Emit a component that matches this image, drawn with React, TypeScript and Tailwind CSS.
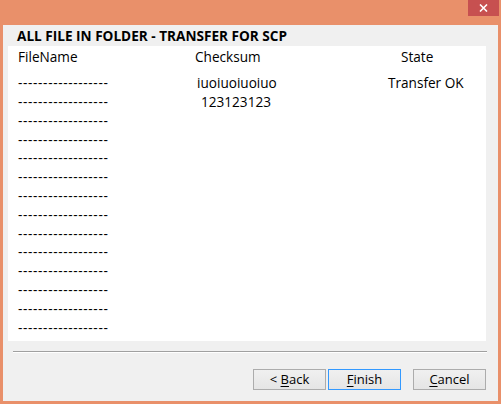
const ROWS = 14;

const DATA: Record<number, { sum?: string; state?: string; sumPad?: string }> = {
  0: { sum: "iuoiuoiuoiuo", state: "Transfer OK", sumPad: "pl-[2px]" },
  1: { sum: "123123123", sumPad: "pl-[6px]" },
};

function WinButton({ label, accel, prefix, focused }: { label: string; accel: string; prefix?: string; focused?: boolean }) {
  return (
    <button
      className={`w-[73px] h-[21px] flex items-center justify-center text-[13px] text-black bg-gradient-to-b from-[#f0f0f0] to-[#e5e5e5] border ${
        focused ? "border-[#3399ff]" : "border-[#acacac]"
      }`}
    >
      <span className="whitespace-pre">
        {prefix}
        <span className="underline underline-offset-2">{accel}</span>
        {label}
      </span>
    </button>
  );
}

export default function App() {
  return (
    <div
      className="w-[501px] h-[404px] bg-[#e9906a] flex flex-col"
      style={{ fontFamily: '"Open Sans", "Noto Sans", sans-serif' }}
    >
      {/* Title bar */}
      <div className="h-[25px] flex justify-end items-start shrink-0 pr-[2px]">
        <div className="w-[31px] h-[16px] bg-[#c75050] flex items-center justify-center">
          <svg width="9" height="8" viewBox="0 0 9 8">
            <path d="M1 0.5 L8 7.5 M8 0.5 L1 7.5" stroke="white" strokeWidth="1.6" />
          </svg>
        </div>
      </div>

      {/* Client */}
      <div className="flex-1 mx-[3px] mb-[3px] bg-[#f0f0f0] flex flex-col">
        <div className="h-[21px] pl-[14px] flex items-center pt-[1px] text-[13.6px] font-bold text-black">
          ALL FILE IN FOLDER - TRANSFER FOR SCP
        </div>

        <div className="ml-[5px] w-[478px] h-[295px] bg-white pt-[2px] text-[13.6px] text-black">
          <div className="h-[19px] flex items-center">
            <div className="w-[187px] pl-[10px]">FileName</div>
            <div className="w-[206px]">Checksum</div>
            <div>State</div>
          </div>
          <div className="mt-[7px]">
            {Array.from({ length: ROWS }).map((_, i) => {
              const d = DATA[i] || {};
              return (
                <div key={i} className="h-[18.8px] flex items-center">
                  <div className="w-[187px] pl-[10px] tracking-[0.65px]">------------------</div>
                  <div className={`w-[193px] ${d.sumPad || ""}`}>{d.sum}</div>
                  <div>{d.state}</div>
                </div>
              );
            })}
          </div>
        </div>

        <div className="mt-[10px] ml-[10px] w-[474px] h-px bg-[#a0a0a0]" />
        <div className="ml-[10px] w-[474px] h-px bg-white" />

        <div className="mt-[16px] ml-[250px] flex">
          <WinButton prefix="< " accel="B" label="ack" />
          <div className="w-[2px]" />
          <WinButton accel="F" label="inish" focused />
          <div className="w-[12px]" />
          <WinButton accel="C" label="ancel" />
        </div>
      </div>
    </div>
  );
}
